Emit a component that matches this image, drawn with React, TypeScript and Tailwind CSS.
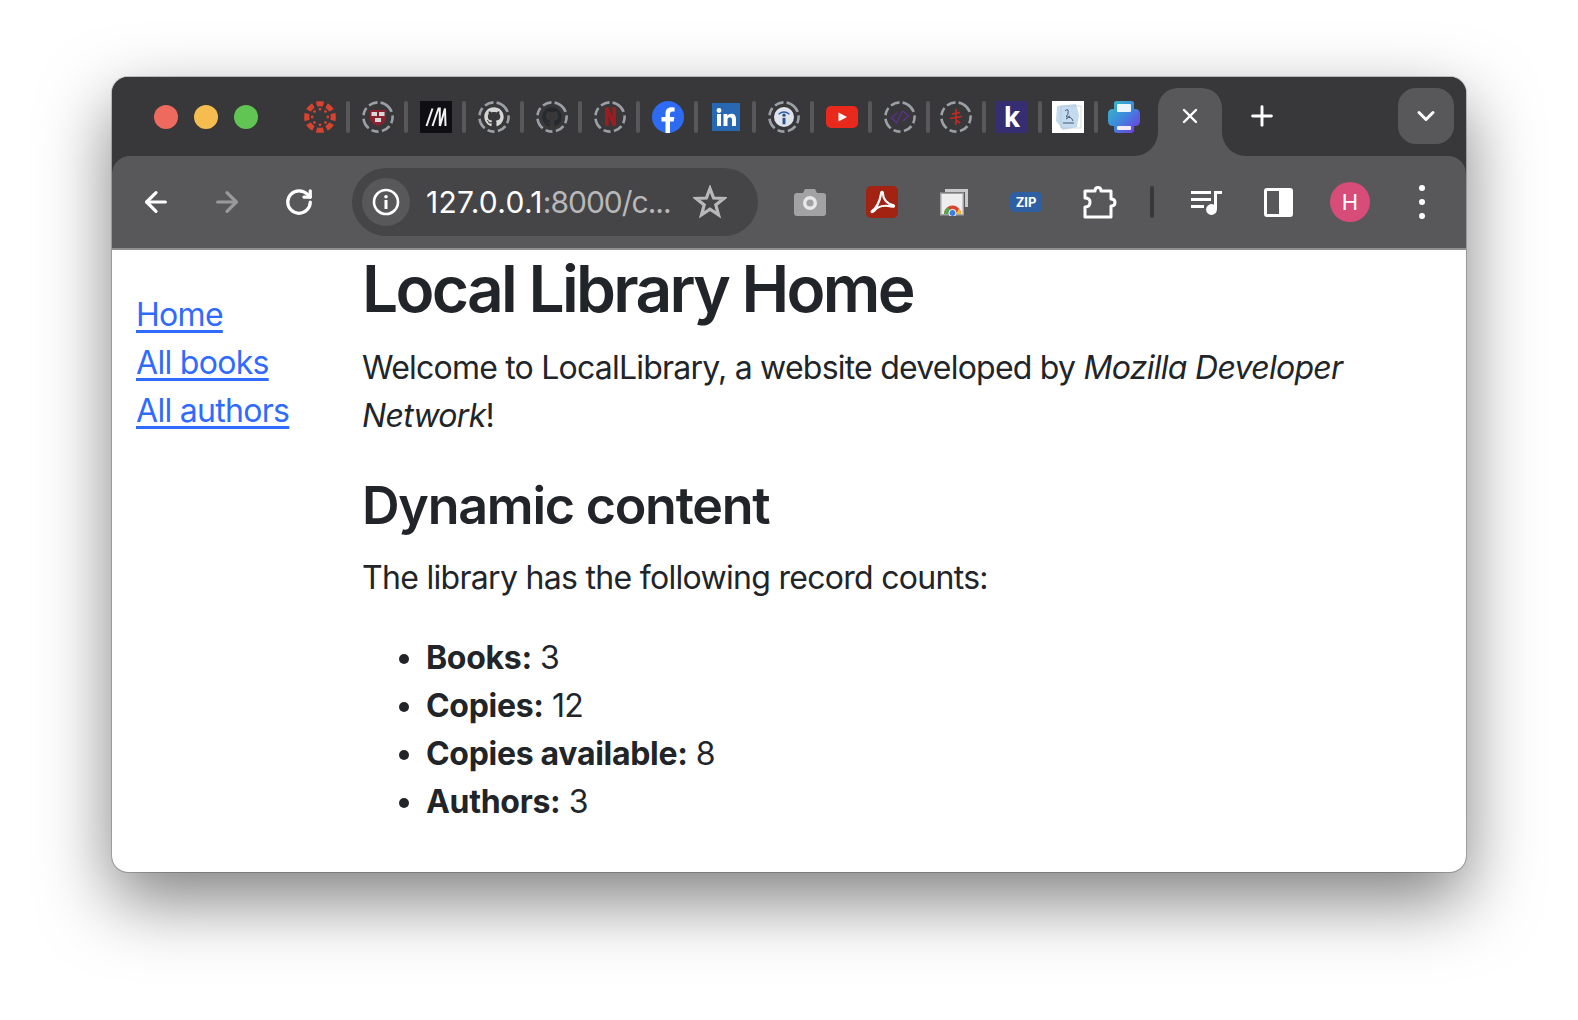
import React from "react";
import { FaGithub } from "react-icons/fa";
import { ArrowLeft, ArrowRight, ChevronDown, Plus, RotateCw, X } from "lucide-react";

function Sep({ wide }: { wide?: boolean }) {
  return <div className={wide ? "w-1 h-8 rounded-sm bg-[#58585a] mr-[2px]" : "w-1 h-8 rounded-sm bg-[#58585a]"} />;
}

// dashed ring chrome puts round a tab group favicon
function Ring({ children, color = "#9aa0a6" }: { children?: React.ReactNode; color?: string }) {
  return (
    <div className="relative w-8 h-8 flex items-center justify-center">
      <svg viewBox="0 0 32 32" className="absolute inset-0 w-8 h-8">
        <circle cx="16" cy="16" r="14.6" fill="none" stroke={color} strokeWidth="2.6" strokeDasharray="10 3.5 8 3.5 9 3.5 7 3.5 11 3.5 8 3.5 9 3.1" transform="rotate(-60 16 16)" />
      </svg>
      {children}
    </div>
  );
}

function CanvasLogo() {
  const dots = [0, 45, 90, 135, 180, 225, 270, 315];
  return (
    <svg viewBox="0 0 32 32" className="w-8 h-8">
      {dots.map((a) => (
        <g key={a} transform={`rotate(${a} 16 16)`}>
          <path d="M11.8 0.6 Q16 -0.2 20.2 0.6 L18.8 5.6 Q16 5 13.2 5.6 Z" fill="#d8432f" />
          <circle cx="16" cy="8.2" r="1.4" fill="#d8432f" />
        </g>
      ))}
    </svg>
  );
}

function Favicons() {
  return (
    <div className="flex items-center gap-[10px] ml-[46px]">
      <CanvasLogo />
      <Sep wide />
      <Ring>
        <svg viewBox="0 0 20 20" className="w-[20px] h-[20px]">
          <path d="M2 3 H18 V11 Q18 16 10 19 Q2 16 2 11 Z" fill="#8c2230" />
          <rect x="3.5" y="5" width="5.5" height="4" fill="#d8d8d8" />
          <rect x="11" y="5" width="5.5" height="4" fill="#d8d8d8" />
          <rect x="7" y="11" width="6" height="4" fill="#d8d8d8" />
        </svg>
      </Ring>
      <Sep wide />
      <div className="w-8 h-8 bg-[#0f0f13] flex items-center justify-center">
        <svg viewBox="0 0 32 32" className="w-8 h-8">
          <path d="M6.5 25 L12.5 7.5 M12.5 25 L18.5 7.5 L19.8 7.5 L19.8 25 M20 25 L25 7.5 L25.5 25" fill="none" stroke="#f2f2f2" strokeWidth="2" />
        </svg>
      </div>
      <Sep wide />
      <Ring>
        <FaGithub className="w-[20px] h-[20px] text-[#d6d6d6]" />
      </Ring>
      <Sep wide />
      <Ring>
        <FaGithub className="w-[20px] h-[20px] text-[#26292e]" />
      </Ring>
      <Sep wide />
      <Ring>
        <svg viewBox="0 0 14 20" className="w-[13px] h-[19px]">
          <path d="M1 0 H5 L9 11 V0 H13 V20 H9 L5 9 V20 H1 Z" fill="#9c1c20" />
        </svg>
      </Ring>
      <Sep wide />
      <svg viewBox="0 0 32 32" className="w-8 h-8">
        <circle cx="16" cy="16" r="16" fill="#2d6bf2" />
        <path d="M13.5 32 V20.5 H9.5 V16 H13.5 V12.5 C13.5 8.5 15.8 6.3 19.5 6.3 C21 6.3 22.6 6.6 22.6 6.6 V10.5 H20.6 C18.7 10.5 18 11.7 18 13 V16 H22.4 L21.7 20.5 H18 V32 Z" fill="#fff" />
      </svg>
      <Sep wide />
      <div className="w-8 h-8 flex items-center justify-center">
        <div className="w-7 h-7 bg-[#2867b2] flex items-center justify-center">
          <svg viewBox="0 0 28 28" className="w-7 h-7">
            <circle cx="7" cy="7.5" r="2.4" fill="#fff" />
            <rect x="5" y="11" width="4" height="12" fill="#fff" />
            <path d="M11.5 11 H15.3 V12.8 C16.2 11.4 17.6 10.7 19.3 10.7 C22.4 10.7 24 12.6 24 16 V23 H20 V16.8 C20 15.2 19.3 14.2 17.9 14.2 C16.4 14.2 15.5 15.2 15.5 16.9 V23 H11.5 Z" fill="#fff" />
          </svg>
        </div>
      </div>
      <Sep wide />
      <Ring>
        <div className="w-[20px] h-[20px] rounded-full bg-[#dfe3ea] flex items-center justify-center">
          <svg viewBox="0 0 22 22" className="w-[20px] h-[20px]">
            <path d="M5 8 Q11 3 17 8" fill="none" stroke="#2d5aa8" strokeWidth="1.4" />
            <circle cx="11" cy="9" r="1.8" fill="#2d4f8f" />
            <rect x="9.4" y="12" width="3.2" height="7" fill="#2d4f8f" />
          </svg>
        </div>
      </Ring>
      <Sep wide />
      <div className="w-8 h-8 flex items-center justify-center">
        <svg viewBox="0 0 32 22" className="w-8 h-[22px]">
          <rect width="32" height="22" rx="5" fill="#e8291c" />
          <path d="M12.5 6.5 L21 11 L12.5 15.5 Z" fill="#fff" />
        </svg>
      </div>
      <Sep wide />
      <Ring>
        <svg viewBox="0 0 22 22" className="w-[22px] h-[22px]">
          <path d="M8 7 L2.5 12 L8 17 M14 5 L19.5 10 L14 15 M13.5 5 L7 18" fill="none" stroke="#5d2f8f" strokeWidth="1.3" />
        </svg>
      </Ring>
      <Sep />
      <Ring>
        <svg viewBox="0 0 22 22" className="w-[22px] h-[22px]">
          <path d="M11 3 V19 M7 8 L15 6.5 M5 12.5 L17 10.5 M11 14 L15 17" fill="none" stroke="#c42a20" strokeWidth="1.6" />
        </svg>
      </Ring>
      <Sep />
      <div className="w-8 h-8 bg-[#352e72] flex items-center justify-center">
        <span className="text-white font-bold text-[28px] leading-none font-['Inter',sans-serif]">k</span>
      </div>
      <Sep />
      <div className="w-8 h-8 bg-white">
        <svg viewBox="0 0 32 32" className="w-8 h-8">
          <path d="M5 5 L24 3 L27 14 L25 26 L11 29 L4 20 Z" fill="#c3dbf0" />
          <path d="M9 5 L29 5 L29 27 L9 27 Z" fill="none" stroke="#b8bcc0" strokeWidth="0.6" />
          <path d="M13 10 Q17 6 16 13 Q12 18 18 15 M14 18 Q19 14 21 20 M11 22 H22" fill="none" stroke="#3b4a5c" strokeWidth="0.9" />
        </svg>
      </div>
      <Sep />
      <svg viewBox="0 0 32 32" className="w-8 h-8">
        <defs>
          <linearGradient id="prn" x1="0" y1="0" x2="1" y2="1">
            <stop offset="0" stopColor="#33c3c3" />
            <stop offset="0.5" stopColor="#3f86dd" />
            <stop offset="1" stopColor="#7a2fe0" />
          </linearGradient>
        </defs>
        <path d="M6 2 Q6 0 9 0 H23 Q26 0 26 2 V8 H27 Q32 8 32 13 V20 Q32 25 27 25 H26 V29 Q26 32 23 32 H9 Q6 32 6 29 V25 H5 Q0 25 0 20 V13 Q0 8 5 8 H6 Z" fill="url(#prn)" />
        <rect x="9" y="3" width="14" height="8" rx="1" fill="#eaf6fb" />
        <rect x="9" y="25" width="14" height="4" rx="1" fill="#f1eafc" />
      </svg>
    </div>
  );
}

function ActiveTab() {
  return (
    <div className="relative w-16 h-[68px] bg-[#58585a] rounded-t-[20px] ml-[18px] flex justify-center pt-[16px]">
      <X className="w-[24px] h-[24px] text-white" strokeWidth={2.4} />
      <div className="absolute bottom-0 -left-6 w-6 h-6 bg-[#58585a]">
        <div className="w-6 h-6 bg-[#38383a] rounded-br-[24px]" />
      </div>
      <div className="absolute bottom-0 -right-6 w-6 h-6 bg-[#58585a]">
        <div className="w-6 h-6 bg-[#38383a] rounded-bl-[24px]" />
      </div>
    </div>
  );
}

function TitleBar() {
  return (
    <div className="h-[79px] bg-[#38383a] flex items-start">
      <div className="flex items-center h-[78px] pt-[1px]">
        <div className="flex gap-[16px] ml-[42px]">
          <div className="w-6 h-6 rounded-full bg-[#ee6a5f]" />
          <div className="w-6 h-6 rounded-full bg-[#f5bd4f]" />
          <div className="w-6 h-6 rounded-full bg-[#61c554]" />
        </div>
        <Favicons />
      </div>
      <div className="self-end">
        <ActiveTab />
      </div>
      <Plus className="w-[32px] h-[32px] text-white ml-[24px] mt-[23px]" strokeWidth={2.2} />
      <div className="w-14 h-14 ml-auto mr-3 mt-[11px] rounded-[18px] bg-[#58585a] flex items-center justify-center">
        <ChevronDown className="w-7 h-7 text-white" strokeWidth={2.6} />
      </div>
    </div>
  );
}

function Toolbar() {
  return (
    <div className="h-[92px] bg-[#58585a] rounded-t-[18px] flex items-center">
      <ArrowLeft className="w-8 h-8 text-white ml-[28px]" strokeWidth={2.4} />
      <ArrowRight className="w-8 h-8 text-[#9a9a9c] ml-[39px]" strokeWidth={2.4} />
      <RotateCw className="w-[30px] h-[30px] text-white ml-[41px]" strokeWidth={2.6} />
      <div className="ml-[38px] w-[406px] h-[68px] rounded-full bg-[#454547] flex items-center pl-[10px]">
        <div className="w-12 h-12 rounded-full bg-[#58585a] flex items-center justify-center">
          <svg viewBox="0 0 28 28" className="w-7 h-7">
            <circle cx="14" cy="14" r="12" fill="none" stroke="#fff" strokeWidth="2.6" />
            <circle cx="14" cy="8.8" r="1.8" fill="#fff" />
            <rect x="12.5" y="12" width="3" height="9" fill="#fff" />
          </svg>
        </div>
        <span className="ml-4 text-[30px] leading-none tracking-[0.3px] text-white font-['Inter',sans-serif]">
          127.0.0.1<span className="text-[#b8b8ba] tracking-[-1px]">:8000/c...</span>
        </span>
        <svg viewBox="0 0 34 34" className="w-[34px] h-[34px] ml-auto mr-[31px]">
          <path d="M17 3.5 L20.6 13 L30.8 13.5 L22.8 19.9 L25.5 29.8 L17 24.2 L8.5 29.8 L11.2 19.9 L3.2 13.5 L13.4 13 Z" fill="none" stroke="#b8b8ba" strokeWidth="3.2" strokeLinejoin="miter" />
        </svg>
      </div>
      <svg viewBox="0 0 32 28" className="w-[32px] h-[28px] ml-[36px]">
        <path d="M3 5 H9 L11 1 H21 L23 5 H29 Q32 5 32 8 V25 Q32 28 29 28 H3 Q0 28 0 25 V8 Q0 5 3 5 Z" fill="#a2a2a4" />
        <circle cx="16" cy="15" r="7" fill="#e8e8e8" />
        <circle cx="16" cy="15" r="3.6" fill="#a2a2a4" />
      </svg>
      <div className="w-8 h-8 rounded-[5px] bg-[#a32313] ml-[40px] flex items-center justify-center">
        <svg viewBox="0 0 32 32" className="w-8 h-8">
          <path d="M6 25 C10 23 14 15 15 8 C15 5 17 5 17 8 C17 13 21 18 27 19 C29 20 28 21 25 20.5 C19 19 12 20 8 25 C6 27 5 26 6 25 Z" fill="none" stroke="#fff" strokeWidth="2.2" />
        </svg>
      </div>
      <svg viewBox="0 0 28 27" className="w-7 h-[27px] ml-[42px]">
        <path d="M5 0 H28 V18 H25 V3 H5 Z" fill="#c8c8ca" />
        <rect x="0" y="3.5" width="24" height="23" fill="#a2a2a4" />
        <rect x="1.5" y="5" width="21" height="20" fill="#eeeeee" />
        <path d="M4 25 A8.5 8.5 0 0 1 21 25 Z" fill="#d9442f" />
        <path d="M4 25 A8.5 8.5 0 0 1 8 18 L12 25 Z" fill="#55a84a" />
        <path d="M16 25 L21 25 A8.5 8.5 0 0 0 19 19.5 Z" fill="#f2c230" />
        <circle cx="12.5" cy="24" r="3.6" fill="#3f7ee0" stroke="#fff" strokeWidth="1" />
      </svg>
      <div className="w-8 h-5 ml-[42px] rounded-[5px] bg-[#2f5fa3] flex items-center justify-center">
        <span className="text-white text-[13px] font-bold leading-none font-['Inter',sans-serif]">ZIP</span>
      </div>
      <svg viewBox="0 0 34 33" className="w-[34px] h-[33px] ml-[41px]">
        <path d="M2 5 H12 Q12 1.5 15 1.5 Q18 1.5 18 5 H28 V13 Q32 13 32 16.5 Q32 20 28 20 V31 H2 V21 Q7 21 7 16 Q7 12 2 12 Z" fill="none" stroke="#fff" strokeWidth="3" strokeLinejoin="round" />
      </svg>
      <div className="w-1 h-8 rounded-sm bg-[#38383a] ml-[33px]" />
      <svg viewBox="0 0 32 26" className="w-8 h-[26px] ml-[37px]">
        <rect x="0" y="2" width="20" height="3" fill="#fff" />
        <rect x="0" y="9" width="20" height="3" fill="#fff" />
        <rect x="0" y="16" width="13" height="3" fill="#fff" />
        <path d="M23 20 V2 H31 V5 H26 V20" fill="#fff" />
        <circle cx="20.5" cy="20.5" r="5.4" fill="#fff" />
      </svg>
      <div className="w-[29px] h-[29px] ml-[41px] rounded-[3px] border-[3px] border-white flex justify-end">
        <div className="w-[11px] h-full bg-white" />
      </div>
      <div className="w-10 h-10 ml-[37px] rounded-full bg-[#d84c79] flex items-center justify-center">
        <span className="text-white text-[22px] leading-none font-['Inter',sans-serif]">H</span>
      </div>
      <div className="ml-[49px] flex flex-col gap-[8px]">
        <div className="w-[6px] h-[6px] rounded-full bg-white" />
        <div className="w-[6px] h-[6px] rounded-full bg-white" />
        <div className="w-[6px] h-[6px] rounded-full bg-white" />
      </div>
    </div>
  );
}

function Content() {
  return (
    <div className="flex flex-1 bg-white border-t-2 border-[#8f8f91] font-['Inter',sans-serif] text-[#212529] text-[32px] leading-[48px] tracking-[-0.78px]">
      <ul className="w-[250px] pl-[24px] pt-[41px] text-[#2f6bff] tracking-[-0.7px] underline decoration-[3px] underline-offset-[4px]">
        <li>Home</li>
        <li>All books</li>
        <li>All authors</li>
      </ul>
      <div className="flex-1 pr-[24px]">
        <h1 className="text-[64px] leading-[77px] font-[580] tracking-[-2.7px]">Local Library Home</h1>
        <p className="mt-[17px]">
          Welcome to LocalLibrary, a website developed by <em className="tracking-[-0.7px]">Mozilla Developer Network</em>!
        </p>
        <h2 className="mt-[35px] text-[52px] leading-[62px] font-semibold tracking-[-1.25px]">Dynamic content</h2>
        <p className="mt-[17px] tracking-[-0.7px]">The library has the following record counts:</p>
        <ul className="mt-[32px] pl-[64px] list-disc">
          <li><strong className="font-bold tracking-[-0.3px]">Books:</strong> 3</li>
          <li><strong className="font-bold tracking-[-0.3px]">Copies:</strong> 12</li>
          <li><strong className="font-bold tracking-[-0.3px]">Copies available:</strong> 8</li>
          <li><strong className="font-bold tracking-[-0.3px]">Authors:</strong> 3</li>
        </ul>
      </div>
    </div>
  );
}

export default function App() {
  return (
    <div className="w-[1578px] h-[1020px] overflow-hidden bg-white pt-[77px] pl-[112px]">
      <div className="w-[1354px] h-[795px] rounded-[16px] overflow-hidden flex flex-col bg-[#38383a] shadow-[0_0_0_1px_rgba(0,0,0,0.2),0_28px_70px_0_rgba(0,0,0,0.5)]">
        <TitleBar />
        <Toolbar />
        <Content />
      </div>
    </div>
  );
}
